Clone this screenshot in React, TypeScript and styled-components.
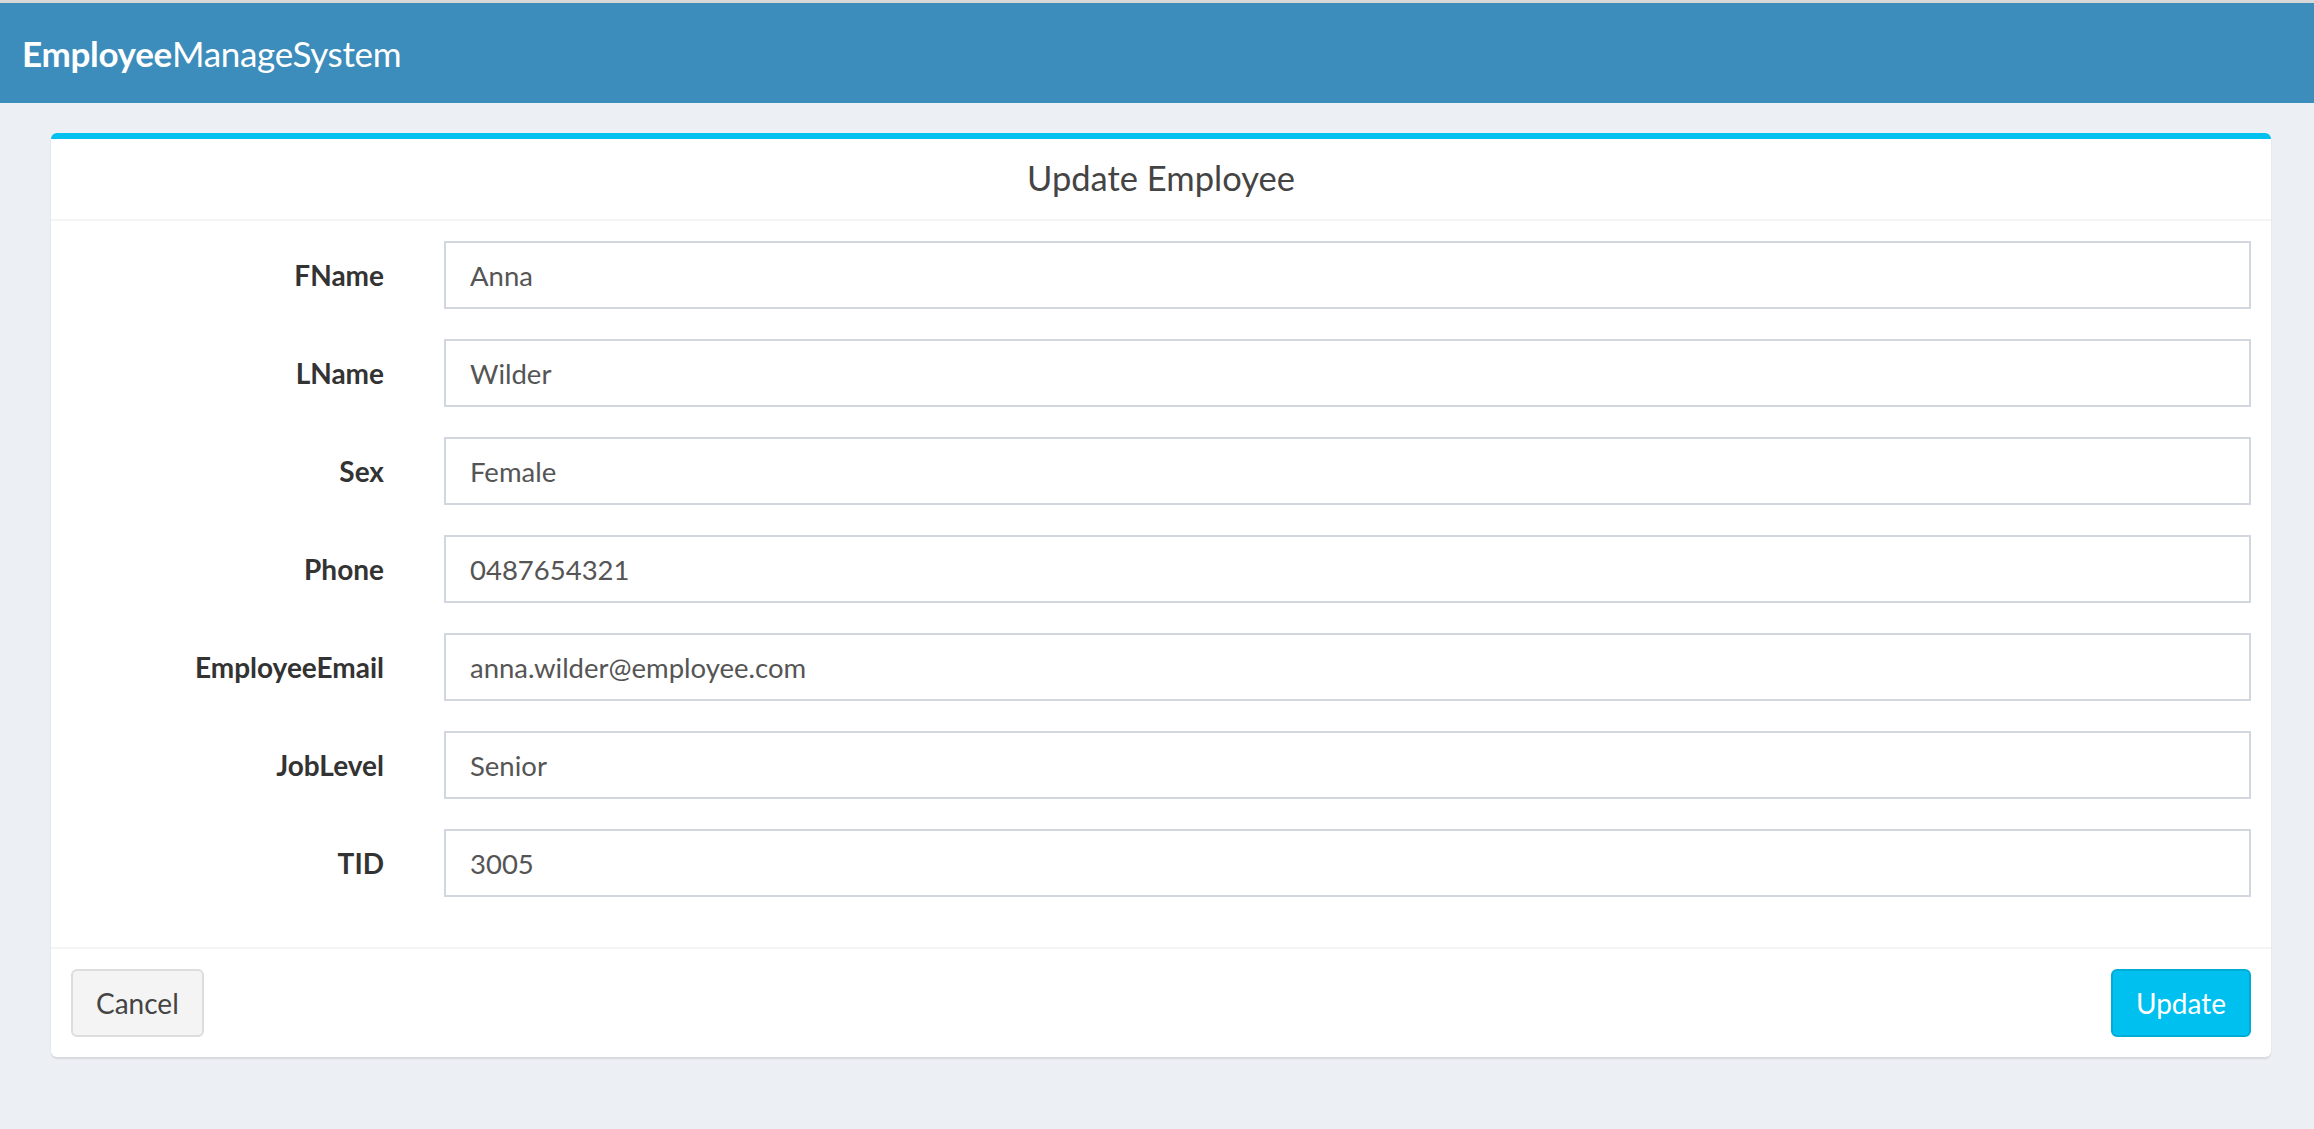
import React from "react";
import styled, { createGlobalStyle } from "styled-components";

const GlobalStyle = createGlobalStyle`
  html, body {
    margin: 0;
    padding: 0;
    background: #ecf0f5;
  }

  body {
    border-top: 3px solid #d8d8d8;
    font-family: Lato, "Open Sans", sans-serif;
    color: #333;
  }

  * {
    box-sizing: border-box;
  }
`;

const Header = styled.header`
  height: 100px;
  background: #3c8dbc;
  display: flex;
  align-items: center;
  padding-left: 22px;
`;

const Brand = styled.div`
  font-size: 35px;
  color: #fff;
  letter-spacing: -0.3px;

  b {
    font-weight: 700;
  }
`;

const Content = styled.main`
  padding: 30px 43px 70px 51px;
`;

const Card = styled.section`
  background: #fff;
  border-top: 6px solid #00c0ef;
  border-radius: 6px;
  box-shadow: 0 2px 2px rgba(0, 0, 0, 0.1);
`;

const CardHeader = styled.div`
  height: 82px;
  display: flex;
  align-items: center;
  justify-content: center;
  border-bottom: 2px solid #f4f4f4;
`;

const Title = styled.h3`
  margin: 0 0 4px;
  font-size: 34.5px;
  font-weight: 400;
  color: #444;
`;

const CardBody = styled.div`
  padding: 20px 20px 50px;
  display: flex;
  flex-direction: column;
  gap: 30px;
`;

const FormRow = styled.div`
  display: grid;
  grid-template-columns: 313px 1fr;
  column-gap: 60px;
  align-items: center;
`;

const Label = styled.label`
  text-align: right;
  font-size: 28px;
  font-weight: 700;
  color: #333;
`;

const Input = styled.input`
  height: 68px;
  width: 100%;
  border: 2px solid #d2d6de;
  border-radius: 0;
  padding: 0 24px;
  font-family: inherit;
  font-size: 27.5px;
  color: #555;
  outline: none;
`;

const CardFooter = styled.div`
  border-top: 2px solid #f4f4f4;
  padding: 20px;
  display: flex;
  justify-content: space-between;
`;

const Button = styled.button<{ $primary?: boolean }>`
  height: 68px;
  padding: 0 23px;
  border-radius: 6px;
  font-family: inherit;
  font-size: 28px;
  cursor: pointer;
  background: ${p => (p.$primary ? "#00c0ef" : "#f4f4f4")};
  border: 2px solid ${p => (p.$primary ? "#00acd6" : "#ddd")};
  color: ${p => (p.$primary ? "#fff" : "#444")};
`;

const fields = [
  { label: "FName", value: "Anna" },
  { label: "LName", value: "Wilder" },
  { label: "Sex", value: "Female" },
  { label: "Phone", value: "0487654321" },
  { label: "EmployeeEmail", value: "anna.wilder@employee.com" },
  { label: "JobLevel", value: "Senior" },
  { label: "TID", value: "3005" },
];

const App = () => {
  return (
    <>
      <GlobalStyle />
      <Header>
        <Brand>
          <b>Employee</b>ManageSystem
        </Brand>
      </Header>

      <Content>
        <Card>
          <CardHeader>
            <Title>Update Employee</Title>
          </CardHeader>

          <CardBody>
            {fields.map(f => (
              <FormRow key={f.label}>
                <Label htmlFor={f.label}>{f.label}</Label>
                <Input id={f.label} defaultValue={f.value} />
              </FormRow>
            ))}
          </CardBody>

          <CardFooter>
            <Button>Cancel</Button>
            <Button $primary>Update</Button>
          </CardFooter>
        </Card>
      </Content>
    </>
  );
};

export default App;
